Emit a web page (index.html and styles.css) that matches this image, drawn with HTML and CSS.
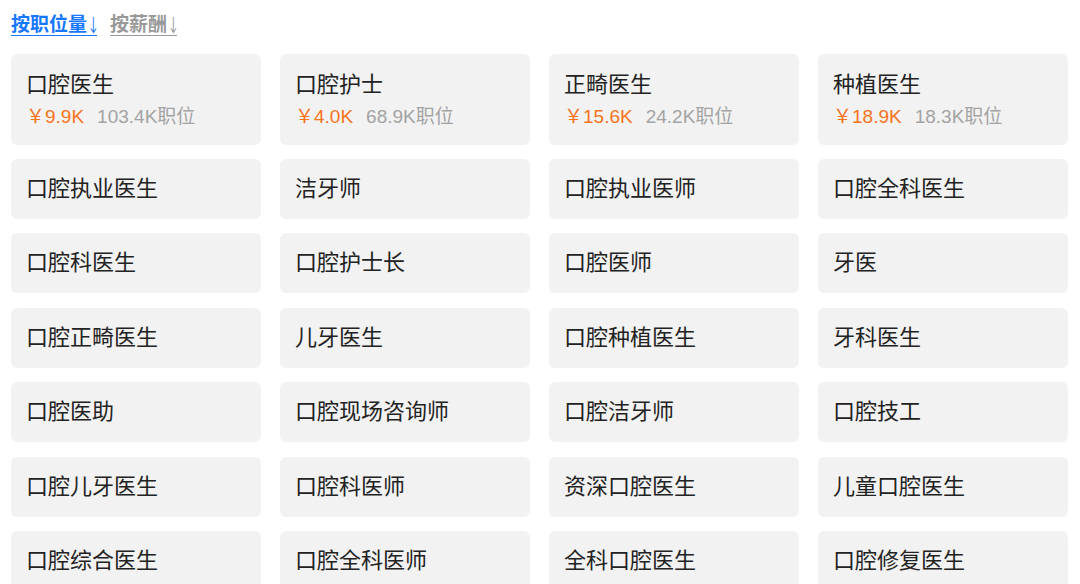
FILE: index.html
```html
<!DOCTYPE html>
<html lang="zh">
<head>
<meta charset="utf-8">
<link rel="stylesheet" href="styles.css">
</head>
<body>
<div class="page">
  <div class="tabs">
    <a class="tab active">按职位量<span class="arrow">↓</span></a>
    <a class="tab">按薪酬<span class="arrow">↓</span></a>
  </div>
  <div class="grid top">
    <div class="card big"><div class="title">口腔医生</div><div class="meta"><span class="pay">￥9.9K</span><span class="count">103.4K职位</span></div></div>
    <div class="card big"><div class="title">口腔护士</div><div class="meta"><span class="pay">￥4.0K</span><span class="count">68.9K职位</span></div></div>
    <div class="card big"><div class="title">正畸医生</div><div class="meta"><span class="pay">￥15.6K</span><span class="count">24.2K职位</span></div></div>
    <div class="card big"><div class="title">种植医生</div><div class="meta"><span class="pay">￥18.9K</span><span class="count">18.3K职位</span></div></div>
  </div>
  <div class="grid rest">
    <div class="card"><div class="title">口腔执业医生</div></div>
    <div class="card"><div class="title">洁牙师</div></div>
    <div class="card"><div class="title">口腔执业医师</div></div>
    <div class="card"><div class="title">口腔全科医生</div></div>
    <div class="card"><div class="title">口腔科医生</div></div>
    <div class="card"><div class="title">口腔护士长</div></div>
    <div class="card"><div class="title">口腔医师</div></div>
    <div class="card"><div class="title">牙医</div></div>
    <div class="card"><div class="title">口腔正畸医生</div></div>
    <div class="card"><div class="title">儿牙医生</div></div>
    <div class="card"><div class="title">口腔种植医生</div></div>
    <div class="card"><div class="title">牙科医生</div></div>
    <div class="card"><div class="title">口腔医助</div></div>
    <div class="card"><div class="title">口腔现场咨询师</div></div>
    <div class="card"><div class="title">口腔洁牙师</div></div>
    <div class="card"><div class="title">口腔技工</div></div>
    <div class="card"><div class="title">口腔儿牙医生</div></div>
    <div class="card"><div class="title">口腔科医师</div></div>
    <div class="card"><div class="title">资深口腔医生</div></div>
    <div class="card"><div class="title">儿童口腔医生</div></div>
    <div class="card"><div class="title">口腔综合医生</div></div>
    <div class="card"><div class="title">口腔全科医师</div></div>
    <div class="card"><div class="title">全科口腔医生</div></div>
    <div class="card"><div class="title">口腔修复医生</div></div>
  </div>
</div>
</body>
</html>
```
FILE: styles.css
```css
html, body {
  margin: 0;
  padding: 0;
  background: #fff;
  overflow: hidden;
}
body {
  font-family: "Liberation Sans", "Noto Sans CJK SC", sans-serif;
  color: #222;
}
.page {
  padding: 14px 12px 0 11px;
  width: 1057px;
}
.tabs {
  display: flex;
  gap: 13px;
  height: 23px;
  align-items: flex-start;
}
.tab {
  display: inline-flex;
  align-items: center;
  font-size: 19px;
  font-weight: bold;
  color: #999;
  line-height: 21px;
  height: 21px;
  border-bottom: 1.5px solid currentColor;
}
.tab.active {
  color: #1677ff;
}
.arrow {
  font-family: "Noto Sans CJK SC", sans-serif;
  font-weight: normal;
  font-size: 18px;
  display: inline-block;
  width: 10px;
  overflow: visible;
  transform: scaleX(0.7);
  transform-origin: left center;
}
.grid {
  display: grid;
  grid-template-columns: repeat(4, 250px);
  column-gap: 19px;
}
.top {
  margin-top: 16.5px;
}
.rest {
  margin-top: 14px;
  row-gap: 14.6px;
}
.card {
  background: #f2f2f2;
  border-radius: 6px;
  height: 60px;
  padding: 0 15px;
  display: flex;
  flex-direction: column;
  justify-content: center;
  box-sizing: border-box;
}
.card.big {
  height: 91px;
  justify-content: flex-start;
  padding-top: 16px;
}
.title {
  font-size: 22px;
  line-height: 30px;
  color: #222;
}
.meta {
  display: flex;
  gap: 13px;
  font-size: 19px;
  line-height: 24px;
  margin-top: 5px;
}
.pay {
  color: #f7731c;
}
.count {
  color: #a3a3a3;
}
```
